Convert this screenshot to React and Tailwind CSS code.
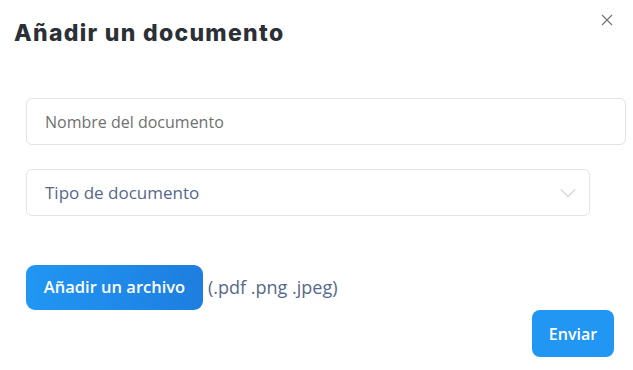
import React from "react";

export default function App() {
  return (
    <div className="relative w-[633px] h-[370px] bg-white overflow-hidden" style={{ fontFamily: '"Open Sans", sans-serif' }}>
      <button className="absolute left-[601px] top-[14px] w-[12px] h-[12px] text-[#777]" aria-label="close">
        <svg viewBox="0 0 12 12" width="12" height="12" stroke="currentColor" strokeWidth="1.3" fill="none">
          <path d="M1 1L11 11M11 1L1 11" />
        </svg>
      </button>
      <div className="pl-[14px] pt-[17px]">
        <h2 className="text-[23px] leading-[32px] font-extrabold tracking-[1.3px] text-[#2b2f36]" style={{ fontFamily: 'Inter, sans-serif' }}>
          Añadir un documento
        </h2>
      </div>
      <div className="pl-[26px] pt-[49px] flex flex-col">
        <div className="w-[600px] h-[47px] border border-[#e3e3e3] rounded-[6px] flex items-center pl-[18px] text-[16px] text-[#707070]">
          Nombre del documento
        </div>
        <div className="mt-[24px] w-[564px] h-[47px] border border-[#e3e3e3] rounded-[6px] flex items-center justify-between pl-[18px] pr-[13px] text-[17px] text-[#56688a]">
          <span>Tipo de documento</span>
          <svg viewBox="0 0 16 10" width="16" height="10" fill="none" stroke="#d6d6d6" strokeWidth="1.3">
            <path d="M1 1.5L8 8.5L15 1.5" />
          </svg>
        </div>
        <div className="mt-[49px] flex items-center">
          <div className="w-[177px] h-[45px] rounded-[9px] bg-gradient-to-r from-[#2196f3] to-[#1e7ee0] flex items-center justify-center text-white text-[16.5px] font-semibold">
            Añadir un archivo
          </div>
          <span className="ml-[5px] text-[18px] text-[#56688a]">(.pdf .png .jpeg)</span>
        </div>
      </div>
      <div className="flex justify-end pr-[19px]">
        <div className="w-[82px] h-[47px] rounded-[8px] bg-[#2196f3] flex items-center justify-center text-white text-[16px] font-semibold">
          Enviar
        </div>
      </div>
    </div>
  );
}
